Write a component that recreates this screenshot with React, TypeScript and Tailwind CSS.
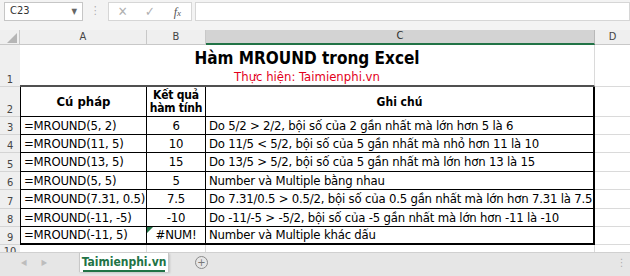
import React from "react";

const F = { fontFamily: '"DejaVu Sans Condensed", "DejaVu Sans", Verdana, sans-serif', fontStretch: "condensed" as const };

type Row = { n: string; a: string; b: string; c: string; h: string; err?: boolean };

const rows: Row[] = [
  { n: "3", a: "=MROUND(5, 2)", b: "6", c: "Do 5/2 > 2/2, bội số của 2 gần nhất mà lớn hơn 5 là 6", h: "h-[18px]" },
  { n: "4", a: "=MROUND(11, 5)", b: "10", c: "Do 11/5 < 5/2, bội số của 5 gần nhất mà nhỏ hơn 11 là 10", h: "h-[18px]" },
  { n: "5", a: "=MROUND(13, 5)", b: "15", c: "Do 13/5 > 5/2, bội số của 5 gần nhất mà lớn hơn 13 là 15", h: "h-[19px]" },
  { n: "6", a: "=MROUND(5, 5)", b: "5", c: "Number và Multiple bằng nhau", h: "h-[18px]" },
  { n: "7", a: "=MROUND(7.31, 0.5)", b: "7.5", c: "Do 7.31/0.5 > 0.5/2, bội số của 0.5 gần nhất mà lớn hơn 7.31 là 7.5", h: "h-[19px]" },
  { n: "8", a: "=MROUND(-11, -5)", b: "-10", c: "Do -11/-5 > -5/2, bội số của -5 gần nhất mà lớn hơn -11 là -10", h: "h-[18px]" },
  { n: "9", a: "=MROUND(-11, 5)", b: "#NUM!", c: "Number và Multiple khác dấu", h: "h-[18px]", err: true },
];

function RowHead({ n, className = "" }: { n: string; className?: string }) {
  return (
    <div className={`w-[20px] shrink-0 bg-[#efefef] border-b border-[#d4d4d4] flex items-end justify-center pb-[1px] text-[11px] leading-none text-[#444] ${className}`}>
      {n}
    </div>
  );
}

export default function App() {
  return (
    <div className="w-[630px] h-[276px] overflow-hidden bg-[#f3f3f3] flex flex-col text-[#000]" style={F}>
      {/* formula bar */}
      <div className="h-[30px] shrink-0 flex items-start pt-[2px]">
        <div className="ml-[4px] w-[79px] h-[19px] bg-white border border-[#c6c6c6] flex items-center pl-[5px] text-[11px] text-[#333] relative">
          C23
          <span className="absolute right-[5px] top-[3px] text-[8px] text-[#666]">▼</span>
        </div>
        <div className="w-[25px] h-[19px] flex items-center justify-center text-[11px] text-[#aaa]">⋮</div>
        <div className="w-[84px] h-[19px] bg-white border border-[#d6d6d6] flex items-center text-[#b0b0b0]">
          <span className="w-[28px] text-center text-[13px]">✕</span>
          <span className="w-[28px] text-center text-[13px]">✓</span>
          <span className="w-[28px] text-center text-[12px] italic text-[#555]" style={{ fontFamily: '"Liberation Serif", serif' }}>
            f<span className="text-[9px]">x</span>
          </span>
        </div>
        <div className="ml-[3px] flex-1 h-[19px] bg-white border border-[#d6d6d6]" />
      </div>

      {/* column headers */}
      <div className="h-[15px] shrink-0 flex text-[11px] text-[#444] bg-[#efefef]">
        <div className="w-[20px] border-r border-b border-[#c8c8c8] relative">
          <svg className="absolute left-[7px] top-[3px]" width="10" height="10" viewBox="0 0 10 10">
            <polygon points="10,0 10,10 0,10" fill="#b5b5b5" />
          </svg>
        </div>
        <div className="w-[127px] border-r border-b border-[#c8c8c8] flex items-center justify-center">A</div>
        <div className="w-[59px] border-r border-b border-[#c8c8c8] flex items-center justify-center">B</div>
        <div className="w-[389px] bg-[#d3d3d3] border-r border-[#b8b8b8] border-b-2 border-b-[#217346] flex items-center justify-center text-[#2b2b2b]">C</div>
        <div className="w-[35px] border-b border-[#c8c8c8] flex items-center justify-center">D</div>
      </div>

      {/* row 1 */}
      <div className="h-[42px] shrink-0 flex">
        <RowHead n="1" />
        <div className="w-[575px] bg-white border-b-2 border-[#505050] border-r border-r-[#dadada] flex flex-col items-center pt-[3px]">
          <div className="text-[17px] font-bold leading-[21px]">Hàm MROUND trong Excel</div>
          <div className="text-[13px] leading-[16px] text-[#e3001b]">Thực hiện: Taimienphi.vn</div>
        </div>
        <div className="w-[35px] bg-white border-b border-[#dadada]" />
      </div>

      {/* row 2 */}
      <div className="h-[30px] shrink-0 flex">
        <RowHead n="2" />
        <div className="w-[127px] bg-white border-l border-black border-r border-b flex items-center justify-center text-[13px] font-bold">Cú pháp</div>
        <div className="w-[59px] bg-white border-r border-b border-black flex flex-col items-center justify-center text-[12px] font-bold leading-[13px] tracking-[-0.2px]">
          <div>Kết quả</div>
          <div>hàm tính</div>
        </div>
        <div className="w-[389px] bg-white border-r-2 border-b border-black flex items-center justify-center text-[12px] font-bold">Ghi chú</div>
        <div className="w-[35px] bg-white border-b border-[#dadada]" />
      </div>

      {rows.map((r, i) => {
        const last = i === rows.length - 1;
        const bb = last ? "border-b-2" : "border-b";
        return (
          <div key={r.n} className={`${r.h} shrink-0 flex text-[13px] tracking-[-0.2px]`}>
            <RowHead n={r.n} />
            <div className={`w-[127px] bg-white border-l border-r ${bb} border-black flex items-center pl-[3px] whitespace-nowrap overflow-hidden`}>{r.a}</div>
            <div className={`w-[59px] bg-white border-r ${bb} border-black flex items-center justify-center relative`}>
              {r.err && (
                <svg className="absolute left-0 top-0" width="6" height="6" viewBox="0 0 6 6">
                  <polygon points="0,0 6,0 0,6" fill="#1e7145" />
                </svg>
              )}
              {r.b}
            </div>
            <div className={`w-[389px] bg-white border-r-2 ${bb} border-black flex items-center pl-[3px] whitespace-nowrap overflow-hidden`}>{r.c}</div>
            <div className="w-[35px] bg-white border-b border-[#dadada]" />
          </div>
        );
      })}

      {/* row 10 partial */}
      <div className="h-[7px] shrink-0 flex overflow-hidden">
        <div className="w-[20px] bg-[#efefef] flex justify-center text-[11px] leading-none text-[#444] pt-[1px]">10</div>
        <div className="w-[127px] bg-white border-r border-[#dadada]" />
        <div className="w-[59px] bg-white border-r border-[#dadada]" />
        <div className="w-[389px] bg-white border-r border-[#dadada]" />
        <div className="w-[35px] bg-white" />
      </div>

      {/* sheet tabs */}
      <div className="flex-1 flex items-start bg-[#e6e6e6] border-t border-[#d0d0d0] relative">
        <div className="w-[79px] h-[19px] flex items-center text-[8px] text-[#bdbdbd]">
          <span className="ml-[21px]">◀</span>
          <span className="ml-[15px]">▶</span>
        </div>
        <div className="w-[90px] h-[19px] bg-white border-x border-[#c8c8c8] shadow-[1px_1px_2px_rgba(0,0,0,0.15)] flex flex-col items-stretch">
          <div className="flex-1 mx-[3px] border-b-2 border-[#217346] flex items-center justify-center text-[12px] font-bold text-[#217346] leading-none">Taimienphi.vn</div>
        </div>
        <div className="ml-[26px] mt-[3px] w-[13px] h-[13px] rounded-full border border-[#8a8a8a] flex items-center justify-center text-[11px] leading-none text-[#777]">+</div>
        <div className="absolute right-[4px] top-[5px] text-[10px] text-[#aaa] leading-none">⋮</div>
      </div>
    </div>
  );
}
